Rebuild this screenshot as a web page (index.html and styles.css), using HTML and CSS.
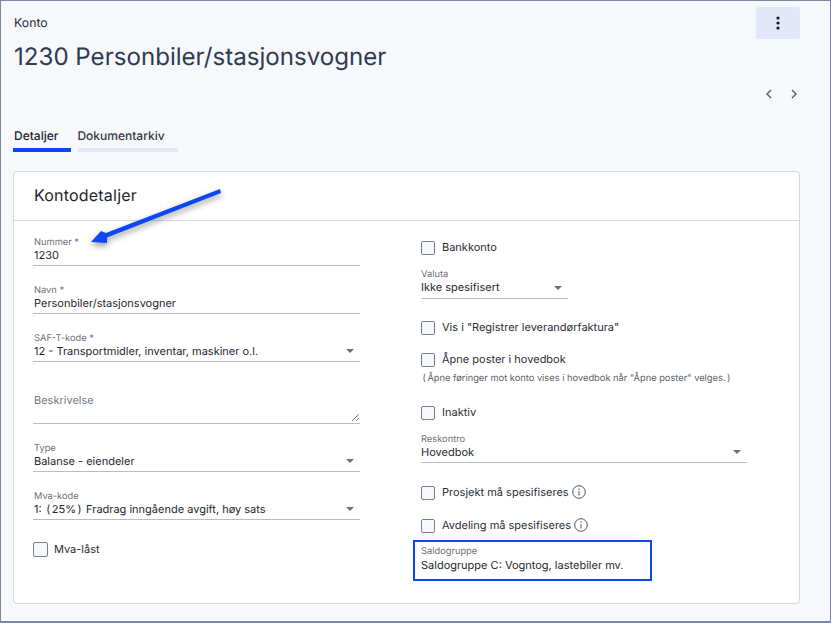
FILE: index.html
```html
<!DOCTYPE html>
<html lang="no">
<head>
<meta charset="utf-8">
<title>Konto</title>
<link rel="stylesheet" href="styles.css">
</head>
<body>
<div class="page">
  <header class="top">
    <div class="heading">
      <div class="crumb">Konto</div>
      <h1>1230 Personbiler/stasjonsvogner</h1>
    </div>
    <button class="more" aria-label="Mer">
      <svg width="4" height="14" viewBox="0 0 4 14"><circle cx="2" cy="2" r="1.6"/><circle cx="2" cy="7" r="1.6"/><circle cx="2" cy="12" r="1.6"/></svg>
    </button>
  </header>
  <div class="pager">
    <svg width="10" height="10" viewBox="0 0 10 10"><path d="M7 1 3 5l4 4"/></svg>
    <svg width="10" height="10" viewBox="0 0 10 10"><path d="M3 1l4 4-4 4"/></svg>
  </div>
  <nav class="tabs">
    <a class="tab active">Detaljer</a>
    <a class="tab">Dokumentarkiv</a>
  </nav>
  <section class="card">
    <h2>Kontodetaljer</h2>
    <div class="form">
      <div class="col">
        <div class="field"><label>Nummer *</label><div class="value">1230</div></div>
        <div class="field"><label>Navn *</label><div class="value">Personbiler/stasjonsvogner</div></div>
        <div class="field select"><label>SAF-T-kode *</label><div class="value">12 - Transportmidler, inventar, maskiner o.l.</div></div>
        <div class="field area"><span class="ph">Beskrivelse</span><svg class="grip" width="9" height="9" viewBox="0 0 9 9"><path d="M1 8 8 1M5 8l3-3"/></svg></div>
        <div class="field select"><label>Type</label><div class="value">Balanse - eiendeler</div></div>
        <div class="field select"><label>Mva-kode</label><div class="value">1: <span class="paren">(</span>25%<span class="paren">)</span> Fradrag inngående avgift, høy sats</div></div>
        <div class="check big"><span class="box"></span>Mva-låst</div>
      </div>
      <div class="col right">
        <div class="check first"><span class="box"></span>Bankkonto</div>
        <div class="field select short"><label>Valuta</label><div class="value">Ikke spesifisert</div></div>
        <div class="check vis"><span class="box"></span>Vis i "Registrer leverandørfaktura"</div>
        <div class="check apne"><span class="box"></span>Åpne poster i hovedbok</div>
        <p class="note"><span class="paren">(</span>Åpne føringer mot konto vises i hovedbok når "Åpne poster" velges.<span class="paren">)</span></p>
        <div class="check inaktiv"><span class="box"></span>Inaktiv</div>
        <div class="field select reskontro"><label>Reskontro</label><div class="value">Hovedbok</div></div>
        <div class="check prosjekt"><span class="box"></span>Prosjekt må spesifiseres<svg class="info" width="14" height="14" viewBox="0 0 14 14"><circle cx="7" cy="7" r="6.300"/><path d="M7 6.200v4.300M7 3.400v1.500"/></svg></div>
        <div class="check avdeling"><span class="box"></span>Avdeling må spesifiseres<svg class="info" width="14" height="14" viewBox="0 0 14 14"><circle cx="7" cy="7" r="6.300"/><path d="M7 6.200v4.300M7 3.400v1.500"/></svg></div>
        <div class="highlight"><label>Saldogruppe</label><div class="value">Saldogruppe C: Vogntog, lastebiler mv.</div></div>
      </div>
    </div>
  </section>
  <svg class="arrow" width="150" height="70" viewBox="0 0 150 70">
    <defs><filter id="s" x="-20%" y="-40%" width="140%" height="190%"><feDropShadow dx="0" dy="3" stdDeviation="3" flood-color="#000" flood-opacity=".4"/></filter></defs>
    <path filter="url(#s)" fill="#0f46f0" d="M132 4 133 8 19 52.500 19 58 3 57 13 46 18 48Z"/>
  </svg>
</div>
</body>
</html>
```
FILE: styles.css
```css
* { box-sizing: border-box; }
html, body { margin: 0; height: 100%; }
body {
  font-family: Inter, "Noto Sans", sans-serif;
  color: #22252c;
  overflow: hidden;
  text-rendering: geometricPrecision;
}
.page {
  position: relative;
  height: 623px;
  padding: 6px 30px 0 12px;
  background: #f6f8fc;
  border: 1px solid #7e88a0;
  border-bottom-width: 2px;
}
.top { display: flex; justify-content: space-between; height: 39px; }
.heading { padding-left: 1px; }
.crumb { font-size: 12.300px; line-height: 16px; margin-top: 8px; color: #2a2d35; }
h1 {
  margin: 11px 0 0;
  font-size: 24.100px;
  line-height: 30px;
  font-weight: 400;
  color: #2d3a50;
  white-space: nowrap;
}
.more {
  width: 44px;
  height: 32px;
  border: 0;
  border-radius: 3px;
  background: #e2e7f9;
  padding: 0;
  display: flex;
  align-items: center;
  justify-content: center;
}
.more svg { fill: #14161c; }
.pager {
  display: flex;
  justify-content: flex-end;
  gap: 15px;
  margin-top: 40px;
  padding-right: 1px;
  height: 16px;
  align-items: center;
}
.pager svg path { fill: none; stroke: #555c6a; stroke-width: 1.4; }
.tabs { display: flex; gap: 7px; margin-top: 16px; }
.tab {
  font-size: 12px;
  font-weight: 500;
  line-height: 16px;
  padding: 10px 0 4px;
  border-bottom: 4px solid #e3e8f8;
  color: #33363e;
}
.tab.active { border-bottom-color: #0f46f0; padding: 10px 13px 4px 1px; color: #20242c; }
.tab:not(.active) { width: 100px; text-indent: -1px; }
.card {
  margin-top: 19px;
  width: 787px;
  height: 433px;
  background: #fff;
  border: 1px solid #d4d7dd;
  border-radius: 4px;
}
h2 {
  margin: 0;
  height: 49px;
  padding: 13px 20px 0;
  font-size: 16px;
  line-height: 20px;
  font-weight: 400;
  letter-spacing: .2px;
  color: #22252c;
  border-bottom: 1px solid #d9dbe0;
}
.form { display: flex; padding: 15px 0 0 19px; }
.col { width: 327px; }
.col.right { margin-left: 61px; }
.field {
  position: relative;
  height: 30px;
  margin-bottom: 18px;
  border-bottom: 1px solid #b9bcc2;
}
label {
  display: block;
  margin-top: 1px;
  padding-left: 1px;
  font-size: 9.300px;
  line-height: 12px;
  color: #6d7078;
}
.field label { position: relative; top: 1px; margin-top: 0; }
.value {
  padding-left: 1px;
  font-size: 11px;
  line-height: 15px;
  color: #24272e;
  white-space: nowrap;
}
.col.right label, .col.right .value { padding-left: 0; }
.paren { margin: 0 1.500px; }
.select::after {
  content: "";
  position: absolute;
  right: 6px;
  bottom: 8px;
  border: 4px solid transparent;
  border-top: 4px solid #6d7078;
  border-bottom-width: 0;
}
.area { height: 53px; margin-top: -9px; }
.ph {
  position: absolute;
  top: 22px;
  left: 1px;
  font-size: 11px;
  line-height: 15px;
  color: #75787f;
}
.grip { position: absolute; right: 0; bottom: 1px; }
.grip path { fill: none; stroke: #6d7078; stroke-width: .9; }
.check {
  display: flex;
  align-items: center;
  font-size: 11px;
  line-height: 15px;
  color: #2a2d35;
  white-space: nowrap;
}
.box {
  width: 14px;
  height: 14px;
  margin-right: 7px;
  flex: none;
  background: #f6f8fc;
  border: 1px solid #777f90;
  border-radius: 2px;
}
.big { margin-top: 22px; }
.big .box { width: 15px; height: 15px; margin-right: 6px; }
.first { margin-top: 4px; }
.short { width: 147px; height: 31px; margin-top: 13px; margin-bottom: 0; }
.vis { margin-top: 21px; }
.apne { margin-top: 17px; }
.note { margin: 6px 0 0; font-size: 9.300px; line-height: 12px; color: #5d6068; white-space: nowrap; }
.inaktiv { margin-top: 20px; }
.reskontro { width: 326px; margin-top: 13px; margin-bottom: 0; }
.prosjekt { margin-top: 22px; }
.avdeling { margin-top: 18px; }
.info { margin-left: 3px; position: relative; top: -1px; flex: none; }
.info circle, .info path { fill: none; stroke: #4e525c; stroke-width: 1; }
.highlight {
  width: 239px;
  height: 41px;
  margin: 7px 0 0 -8px;
  padding: 3px 0 0 6px;
  background: #fff;
  border: 2px solid #0f46f0;
}
.arrow { position: absolute; left: 87px; top: 184px; pointer-events: none; }
```
